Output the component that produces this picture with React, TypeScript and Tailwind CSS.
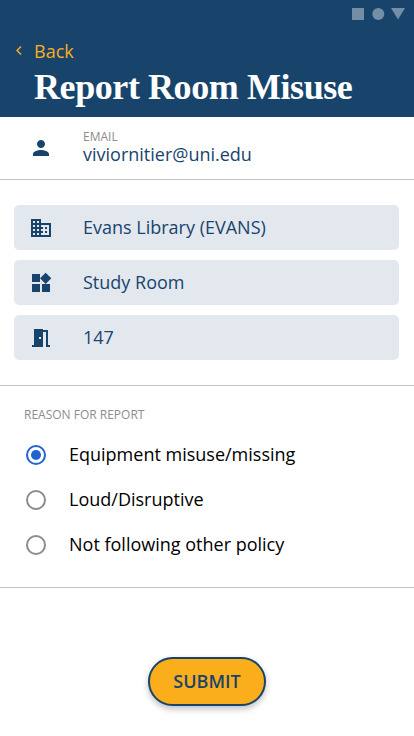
import { useState } from "react";

const icons = {
  person:
    "M12 12c2.21 0 4-1.79 4-4s-1.79-4-4-4-4 1.79-4 4 1.79 4 4 4zm0 2c-2.67 0-8 1.34-8 4v2h16v-2c0-2.66-5.33-4-8-4z",
  building:
    "M12 7V3H2v18h20V7H12zM6 19H4v-2h2v2zm0-4H4v-2h2v2zm0-4H4V9h2v2zm0-4H4V5h2v2zm4 12H8v-2h2v2zm0-4H8v-2h2v2zm0-4H8V9h2v2zm0-4H8V5h2v2zm10 12h-8v-2h2v-2h-2v-2h2v-2h-2V9h8v10zm-2-8h-2v2h2v-2zm0 4h-2v2h2v-2z",
  widgets:
    "M13 13v8h8v-8h-8zM3 21h8v-8H3v8zM3 3v8h8V3H3zm13.66-1.31L11 7.34 16.66 13l5.66-5.66-5.66-5.65z",
  door: "M14 6v15H3v-2h2V3h9v1h5v15h2v2h-4V6h-3zm-4 5v2h2v-2h-2z",
};

function Icon({ name }: { name: keyof typeof icons }) {
  return (
    <svg viewBox="0 0 24 24" className="size-6 shrink-0 fill-[#18446c]">
      <path d={icons[name]} />
    </svg>
  );
}

const rooms: { icon: keyof typeof icons; label: string }[] = [
  { icon: "building", label: "Evans Library (EVANS)" },
  { icon: "widgets", label: "Study Room" },
  { icon: "door", label: "147" },
];

const reasons = ["Equipment misuse/missing", "Loud/Disruptive", "Not following other policy"];

export default function App() {
  const [selected, setSelected] = useState(0);
  return (
    <div className="flex h-[736px] w-[414px] flex-col overflow-hidden bg-white font-['Open_Sans','Noto_Sans',sans-serif] text-lg text-[#18446c]">
      <header className="h-[117px] shrink-0 bg-[#18446c]">
        <div className="flex h-7 justify-end pt-2 pr-[9px]">
          <svg viewBox="0 0 54 12" className="h-3 w-[54px] fill-white/40">
            <path d="M1 0h12v12H1z" />
            <circle cx="27.3" cy="6" r="6" />
            <path d="M40 0h14l-7 11.5z" />
          </svg>
        </div>
        <button className="flex h-[46px] items-center pl-4 leading-none text-[#f9ae1e]">
          <svg viewBox="0 0 6 10" className="mr-3 h-[10px] w-[6px] fill-none stroke-current stroke-[1.5]">
            <path d="M5 0.5 1 4.5l4 4" />
          </svg>
          Back
        </button>
        <h1 className="-mt-[7px] pl-[34px] font-['Liberation_Serif',serif] text-[36px] leading-10 font-bold tracking-[-0.42px] whitespace-nowrap text-white">
          Report Room Misuse
        </h1>
      </header>

      <section className="flex h-[63px] shrink-0 items-center border-b border-[#c4c4c4] pl-[29px]">
        <Icon name="person" />
        <div className="ml-[30px] pb-[3px]">
          <p className="text-xs leading-4 text-[#8c8c8c]">EMAIL</p>
          <p className="leading-[19px]">viviornitier@uni.edu</p>
        </div>
      </section>

      <section className="flex h-[206px] shrink-0 flex-col gap-[10px] border-b border-[#c4c4c4] pt-[25px] pr-[15px] pl-[14px]">
        {rooms.map((room) => (
          <div key={room.label} className="flex h-[45px] items-center rounded-[5px] bg-[#e3e8ef] pl-[15px]">
            <Icon name={room.icon} />
            <span className="ml-[30px] pb-0.5">{room.label}</span>
          </div>
        ))}
      </section>

      <section className="h-[202px] shrink-0 border-b border-[#c4c4c4] pt-5">
        <h2 className="pl-6 text-xs leading-[18px] text-[#8c8c8c]">REASON FOR REPORT</h2>
        <div className="mt-2">
          {reasons.map((reason, index) => (
            <button
              key={reason}
              role="radio"
              aria-checked={selected === index}
              onClick={() => setSelected(index)}
              className="flex h-[45px] w-full items-center pl-[26px] text-black"
            >
              <span
                className={
                  selected === index
                    ? "grid size-5 place-items-center rounded-full border-2 border-[#2264d1]"
                    : "grid size-5 place-items-center rounded-full border-2 border-[#8c8c8c]"
                }
              >
                {selected === index && <span className="size-[10px] rounded-full bg-[#2264d1]" />}
              </span>
              <span className="ml-[23px] pb-0.5">{reason}</span>
            </button>
          ))}
        </div>
      </section>

      <div className="flex justify-center pt-[69px]">
        <button className="h-[49px] w-[118px] rounded-full border-2 border-[#18446c] bg-[#fbae1c] pb-0.5 font-semibold shadow-[0_3px_6px_rgba(0,0,0,0.25)]">
          SUBMIT
        </button>
      </div>
    </div>
  );
}
